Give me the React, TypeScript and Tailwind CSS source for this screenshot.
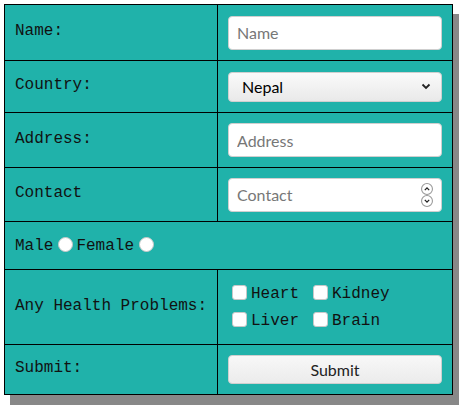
export default function App() {
  const label = "border border-black pl-[10px] pr-2 pb-[3px] align-middle text-[16px] text-[#111]";
  const field = "border border-black px-[10px] align-middle";
  const sans = { fontFamily: 'Lato, "Open Sans", sans-serif' };

  return (
    <div className="w-[466px] h-[414px] bg-white pt-1 pl-1" style={{ fontFamily: '"Liberation Mono", "Courier New", monospace' }}>
      <table className="w-[449px] table-fixed border-collapse bg-[#20b2aa] shadow-[6px_10px_0_#888888]">
        <colgroup>
          <col className="w-[213px]" />
          <col />
        </colgroup>
        <tbody>
          <tr className="h-[56px]">
            <td className={label}>Name:</td>
            <td className={field}>
              <input
                placeholder="Name"
                className="block w-full h-[34px] rounded-[4px] border border-[#cfcfcf] bg-white px-2 text-[16px] placeholder:text-[#777] outline-none"
                style={sans}
              />
            </td>
          </tr>
          <tr className="h-[52px]">
            <td className={label}>Country:</td>
            <td className={field}>
              <div
                className="flex items-center justify-between h-[30px] rounded-[4px] border border-[#cfcfcf] bg-gradient-to-b from-[#fafafa] to-[#e9e9e9] pl-[13px] pr-[10px] text-[16px] text-black"
                style={sans}
              >
                <span>Nepal</span>
                <svg width="10" height="7" viewBox="0 0 10 7" fill="none" stroke="#222" strokeWidth="1.8">
                  <path d="M1.5 1.5 L5 5 L8.5 1.5" />
                </svg>
              </div>
            </td>
          </tr>
          <tr className="h-[55px]">
            <td className={label}>Address:</td>
            <td className={field}>
              <input
                placeholder="Address"
                className="block w-full h-[34px] rounded-[4px] border border-[#cfcfcf] bg-white px-2 text-[16px] placeholder:text-[#777] outline-none"
                style={sans}
              />
            </td>
          </tr>
          <tr className="h-[54px]">
            <td className={label}>Contact</td>
            <td className={field}>
              <div className="flex items-center h-[34px] rounded-[4px] border border-[#cfcfcf] bg-white pl-2 pr-[8px]">
                <input
                  placeholder="Contact"
                  className="flex-1 min-w-0 text-[16px] placeholder:text-[#777] outline-none"
                  style={sans}
                />
                <div className="flex flex-col">
                  <Spin d="M3.5 6.5 L5.5 4.5 L7.5 6.5" />
                  <Spin d="M3.5 4.5 L5.5 6.5 L7.5 4.5" />
                </div>
              </div>
            </td>
          </tr>
          <tr className="h-[48px]">
            <td colSpan={2} className="border border-black pl-[10px] align-middle text-[16px] text-[#111]">
              <div className="flex items-center">
                <span>Male</span>
                <span className="ml-[5px] mr-[3px] -mt-[3px] inline-block w-[15px] h-[15px] rounded-full bg-white border border-[#c8c8c8]" />
                <span>Female</span>
                <span className="ml-[5px] -mt-[3px] inline-block w-[15px] h-[15px] rounded-full bg-white border border-[#c8c8c8]" />
              </div>
            </td>
          </tr>
          <tr className="h-[75px]">
            <td className={label}>Any Health Problems:</td>
            <td className={`${field} text-[16px] text-[#111]`}>
              <div className="grid grid-cols-[81px_auto] gap-y-[12px] pl-[4px] pb-[2px]">
                {["Heart", "Kidney", "Liver", "Brain"].map((t) => (
                  <div key={t} className="flex items-center h-[15px] leading-none">
                    <span className="inline-block w-[15px] h-[15px] rounded-[3px] bg-white border border-[#c8c8c8] mr-[4px]" />
                    <span className="pt-[3px]">{t}</span>
                  </div>
                ))}
              </div>
            </td>
          </tr>
          <tr className="h-[50px]">
            <td className={label}>Submit:</td>
            <td className={field}>
              <button
                className="block w-full h-[29px] rounded-[4px] border border-[#cfcfcf] bg-gradient-to-b from-[#f8f8f8] to-[#ebebeb] text-[16px] text-[#222]"
                style={sans}
              >
                Submit
              </button>
            </td>
          </tr>
        </tbody>
      </table>
    </div>
  );
}

function Spin({ d }: { d: string }) {
  return (
    <svg width="12" height="12" viewBox="0 0 11 11" fill="none">
      <circle cx="5.5" cy="5.5" r="5" stroke="#999" strokeWidth="1" fill="white" />
      <path d={d} stroke="#222" strokeWidth="1.2" />
    </svg>
  );
}
